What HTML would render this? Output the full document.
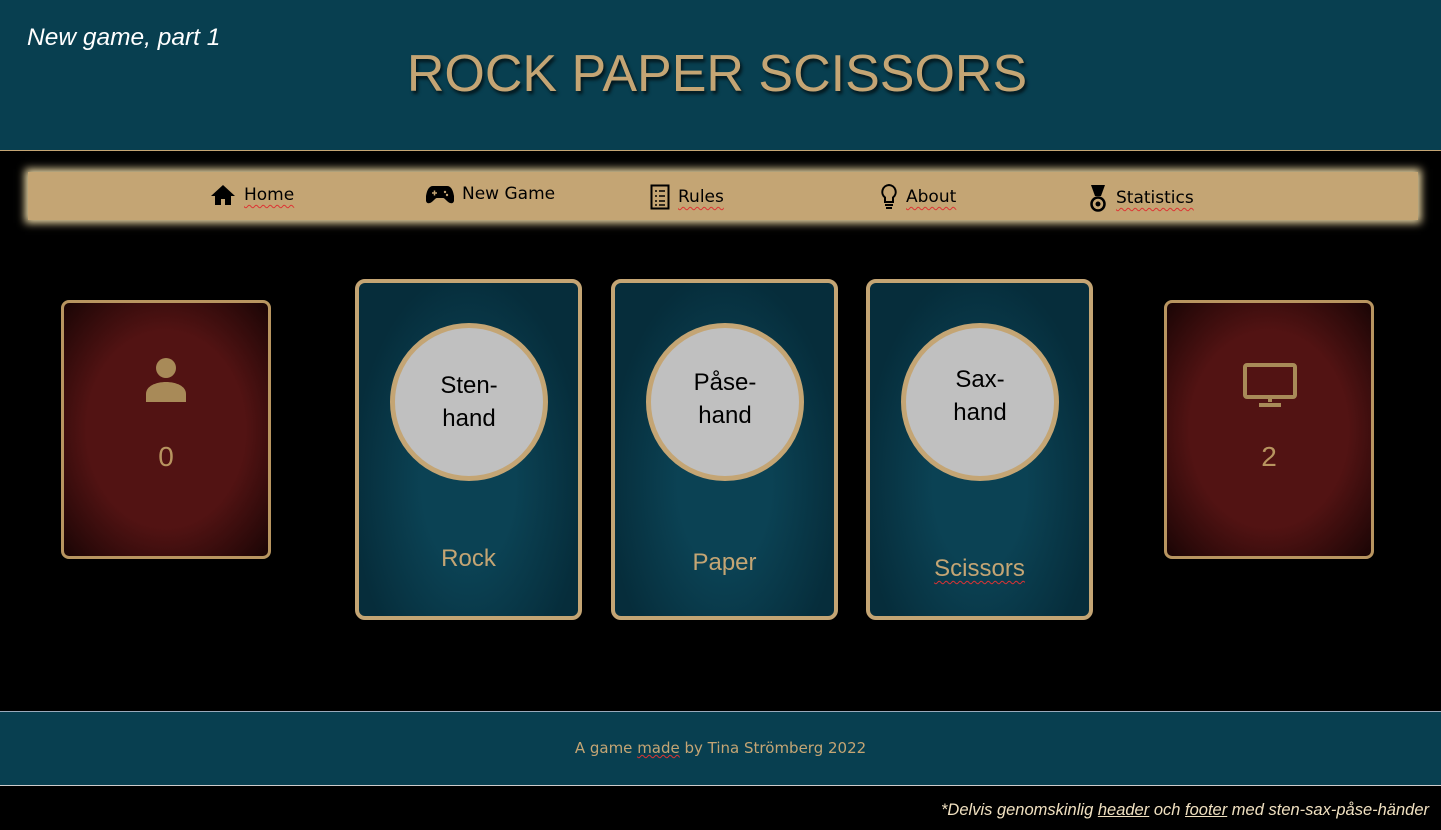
<!DOCTYPE html>
<html><head><meta charset="utf-8"><style>
*{margin:0;padding:0;box-sizing:border-box}
body{width:1441px;height:830px;background:#000;position:relative;overflow:hidden;font-family:"Liberation Sans",sans-serif}
.hdr{position:absolute;left:0;top:0;width:1441px;height:151px;background:#083f50;border-bottom:1px solid #c4a574}
.sub{position:absolute;left:27px;top:24px;color:#fff;font-style:italic;font-size:24.5px}
h1{position:absolute;left:0;width:1434px;top:44px;text-align:center;color:#c4a574;font-weight:normal;font-size:52px;text-shadow:2px 3px 3px #000a}
.nav{position:absolute;left:28px;top:172px;width:1390px;height:48px;background:#c4a574;box-shadow:0 0 8px 3px #f0dca8}
.ni{position:absolute;top:12px;font-family:"DejaVu Sans",sans-serif;font-size:17px;color:#000;display:flex;align-items:center;gap:8px}
.ni u{text-decoration:underline wavy #d33;text-decoration-thickness:1px;text-underline-offset:4px}
.red{position:absolute;top:300px;width:210px;height:259px;border:3px solid #b89560;border-radius:8px;background:radial-gradient(#521313 55%,#1a0505 100%);}
.red .n{position:absolute;width:100%;top:138px;text-align:center;color:#b89560;font-size:28px}
.card{position:absolute;top:279px;width:227px;height:341px;border:4px solid #c4a574;border-radius:10px;background:radial-gradient(ellipse at 50% 60%,#0b4254 30%,#062d3b 75%)}
.circ{position:absolute;left:31px;top:40px;width:158px;height:158px;border-radius:50%;background:#c0c0c0;border:5px solid #c4a574;display:flex;align-items:center;justify-content:center;text-align:center;font-size:24px;line-height:33px;color:#000}
.lab{position:absolute;width:100%;text-align:center;color:#c4a574;font-size:24px}
.ftr{position:absolute;left:0;top:711px;width:1441px;height:75px;background:#083f50;border-top:1px solid #9ab;border-bottom:1px solid #ccc;text-align:center;color:#c4a574;font-family:"DejaVu Sans",sans-serif;font-size:15px;line-height:73px}
.note{position:absolute;right:12px;top:801px;color:#f0e0c0;font-style:italic;font-size:16.5px}
</style></head><body>
<div class="hdr"><div class="sub">New game, part 1</div><h1>ROCK PAPER SCISSORS</h1></div>
<div class="nav">
<div class="ni" style="left:182px"><svg width="26" height="22" viewBox="0 0 26 22"><path d="M13 1L1 12h4v9h6v-6h4v6h6v-9h4z" fill="#000"/></svg><u>Home</u></div>
<div class="ni" style="left:398px"><svg width="28" height="20" viewBox="0 0 28 20"><path d="M7 2h14c4 0 6 4 7 10s-1 8-4 7-5-5-7-5h-6c-2 0-4 4-7 5S-1 18 0 12 3 2 7 2z" fill="#000"/><path d="M6 9h5M8.5 6.5v5" stroke="#c4a574" stroke-width="1.5"/><circle cx="19" cy="8" r="1.2" fill="#c4a574"/><circle cx="21" cy="11" r="1.2" fill="#c4a574"/></svg>New Game</div>
<div class="ni" style="left:622px"><svg width="20" height="26" viewBox="0 0 20 26"><rect x="1.5" y="1.5" width="17" height="23" fill="none" stroke="#000" stroke-width="2"/><path d="M5 7h2M9 7h6M5 12h2M9 12h6M5 17h2M9 17h6M5 21h2M9 21h6" stroke="#000" stroke-width="1.5"/></svg><u>Rules</u></div>
<div class="ni" style="left:852px"><svg width="18" height="26" viewBox="0 0 18 26"><path d="M9 1a7 7 0 0 0-4 12.5V18h8v-4.5A7 7 0 0 0 9 1z" fill="none" stroke="#000" stroke-width="2"/><path d="M5 21h8M6 24h6" stroke="#000" stroke-width="2"/></svg><u>About</u></div>
<div class="ni" style="left:1060px"><svg width="20" height="28" viewBox="0 0 20 28"><path d="M3 1h14l-4 11h-6z" fill="#000"/><circle cx="10" cy="20" r="6.5" fill="none" stroke="#000" stroke-width="2.5"/><circle cx="10" cy="20" r="2.5" fill="#000"/></svg><u>Statistics</u></div>
</div>
<div class="red" style="left:61px"><svg style="position:absolute;left:80px;top:53px" width="44" height="46" viewBox="0 0 44 46"><circle cx="22" cy="12" r="10" fill="#a88a58"/><path d="M2 46V38c0-8 10-12 20-12s20 4 20 12v8z" fill="#a88a58"/></svg><div class="n">0</div></div>
<div class="red" style="left:1164px"><svg style="position:absolute;left:76px;top:60px" width="54" height="44" viewBox="0 0 54 44"><rect x="2" y="2" width="50" height="32" rx="2" fill="none" stroke="#a88a58" stroke-width="4"/><path d="M27 34v5M16 42h22" stroke="#a88a58" stroke-width="4"/></svg><div class="n">2</div></div>
<div class="card" style="left:355px"><div class="circ">Sten-<br>hand</div><div class="lab" style="top:262px">Rock</div></div>
<div class="card" style="left:611px"><div class="circ" style="padding-bottom:6px">Påse-<br>hand</div><div class="lab" style="top:266px">Paper</div></div>
<div class="card" style="left:866px"><div class="circ" style="padding-bottom:12px">Sax-<br>hand</div><div class="lab" style="top:272px"><span style="text-decoration:underline wavy #d33;text-underline-offset:4px;text-decoration-thickness:1px">Scissors</span></div></div>
<div class="ftr">A game <span style="text-decoration:underline wavy #d33;text-decoration-thickness:1px">made</span> by Tina Strömberg 2022</div>
<div class="note">*Delvis genomskinlig <u>header</u> och <u>footer</u> med sten-sax-påse-händer</div>
</body></html>
